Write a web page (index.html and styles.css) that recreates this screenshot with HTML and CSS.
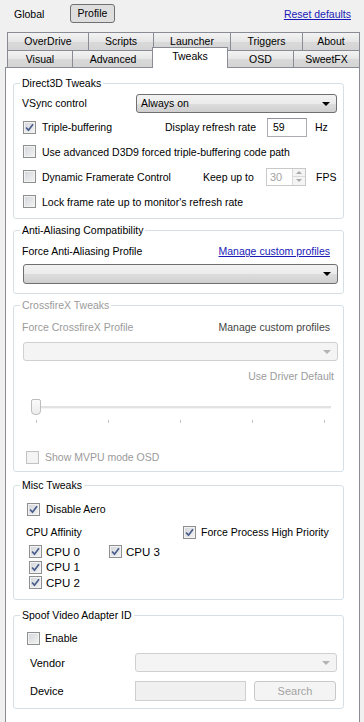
FILE: index.html
```html
<!DOCTYPE html>
<html lang="en">
<head>
  <meta charset="UTF-8" />
  <meta name="viewport" content="width=device-width, initial-scale=1.0" />
  <title>Profile - Tweaks</title>
  <link rel="stylesheet" href="styles.css">
</head>
<body>
  <div class="topbar">
    <span class="mode">Global</span>
    <span class="mode-btn">Profile</span>
    <a class="link reset" href="#">Reset defaults</a>
  </div>

  <div class="tabs">
    <div class="tabrow row1">
      <div class="tab">OverDrive</div>
      <div class="tab">Scripts</div>
      <div class="tab">Launcher</div>
      <div class="tab">Triggers</div>
      <div class="tab last">About</div>
    </div>
    <div class="tabrow row2">
      <div class="tab">Visual</div>
      <div class="tab">Advanced</div>
      <div class="tab active">Tweaks</div>
      <div class="tab">OSD</div>
      <div class="tab last">SweetFX</div>
    </div>
  </div>

  <div class="panel">
    <!-- Direct3D -->
    <fieldset class="group d3d">
      <legend>Direct3D Tweaks</legend>
      <div class="row">
        <span class="vsync-label">VSync control</span>
        <div class="combo vsync">Always on<span class="arrow"></span></div>
      </div>
      <div class="row">
        <label class="check col-a"><span class="cb on"><svg width="11" height="11" viewBox="0 0 11 11"><path d="M2 5.5 L4.5 8.2 L9 2.3" /></svg></span>Triple-buffering</label>
        <span class="col-b">Display refresh rate</span>
        <span class="textbox small">59</span>
        <span class="unit-hz">Hz</span>
      </div>
      <div class="row tall">
        <label class="check"><span class="cb"></span>Use advanced D3D9 forced triple-buffering code path</label>
      </div>
      <div class="row tall">
        <label class="check col-c"><span class="cb"></span>Dynamic Framerate Control</label>
        <span class="col-d">Keep up to</span>
        <span class="spin"><span class="spin-val">30</span><span class="spin-btns"><span class="up"></span><span class="down"></span></span></span>
        <span class="unit-fps">FPS</span>
      </div>
      <div class="row tall">
        <label class="check"><span class="cb"></span>Lock frame rate up to monitor's refresh rate</label>
      </div>
    </fieldset>

    <!-- Anti-aliasing -->
    <fieldset class="group aa">
      <legend>Anti-Aliasing Compatibility</legend>
      <div class="row head">
        <span>Force Anti-Aliasing Profile</span>
        <a class="link manage" href="#">Manage custom profiles</a>
      </div>
      <div class="combo wide"><span class="arrow"></span></div>
    </fieldset>

    <!-- CrossfireX (disabled) -->
    <fieldset class="group cfx disabled">
      <legend>CrossfireX Tweaks</legend>
      <div class="row head">
        <span>Force CrossfireX Profile</span>
        <span class="manage dim">Manage custom profiles</span>
      </div>
      <div class="combo wide off"><span class="arrow"></span></div>
      <div class="driver-default">Use Driver Default</div>
      <div class="slider">
        <span class="track"></span>
        <span class="thumb"></span>
        <div class="ticks"><i></i><i></i><i></i><i></i><i></i></div>
      </div>
      <div class="row mvpu">
        <label class="check"><span class="cb off"></span>Show MVPU mode OSD</label>
      </div>
    </fieldset>

    <!-- Misc -->
    <fieldset class="group misc">
      <legend>Misc Tweaks</legend>
      <div class="row short">
        <label class="check indent"><span class="cb on"><svg width="11" height="11" viewBox="0 0 11 11"><path d="M2 5.5 L4.5 8.2 L9 2.3" /></svg></span>Disable Aero</label>
      </div>
      <div class="row affinity-row">
        <span class="affinity">CPU Affinity</span>
        <label class="check"><span class="cb on"><svg width="11" height="11" viewBox="0 0 11 11"><path d="M2 5.5 L4.5 8.2 L9 2.3" /></svg></span>Force Process High Priority</label>
      </div>
      <div class="cpus">
        <label class="check tight"><span class="cb on"><svg width="11" height="11" viewBox="0 0 11 11"><path d="M2 5.5 L4.5 8.2 L9 2.3" /></svg></span>CPU 0</label>
        <label class="check tight"><span class="cb on"><svg width="11" height="11" viewBox="0 0 11 11"><path d="M2 5.5 L4.5 8.2 L9 2.3" /></svg></span>CPU 1</label>
        <label class="check tight"><span class="cb on"><svg width="11" height="11" viewBox="0 0 11 11"><path d="M2 5.5 L4.5 8.2 L9 2.3" /></svg></span>CPU 2</label>
        <label class="check tight"><span class="cb on"><svg width="11" height="11" viewBox="0 0 11 11"><path d="M2 5.5 L4.5 8.2 L9 2.3" /></svg></span>CPU 3</label>
      </div>
    </fieldset>

    <!-- Spoof -->
    <fieldset class="group spoof">
      <legend>Spoof Video Adapter ID</legend>
      <div class="row short">
        <label class="check indent"><span class="cb"></span>Enable</label>
      </div>
      <div class="row vendor">
        <span class="field-label">Vendor</span>
        <div class="combo off field"><span class="arrow"></span></div>
      </div>
      <div class="row device">
        <span class="field-label">Device</span>
        <span class="textbox off device-box"></span>
        <span class="button off">Search</span>
      </div>
    </fieldset>
  </div>
</body>
</html>
```

FILE: styles.css
```css
html, body { height: 722px; overflow: hidden; }
body { margin: 0; background: #f0f0f0; font-family: "Liberation Sans", Arial, sans-serif; font-size: 10.5px; color: #000; }

/* top strip */
.topbar { display: flex; align-items: center; height: 19px; padding: 4px 13px 9px 14px; }
.mode { width: 56px; }
.mode-btn { width: 43px; height: 17px; line-height: 17px; text-align: center; border: 1px solid #707070; border-radius: 3px; background: #dedede; }
.link { color: #1a1ab8; text-decoration: underline; }
.reset { margin-left: auto; }

/* tabs */
.tabs { margin-left: 7px; width: 353px; }
.tabrow { display: grid; }
.row1 { grid-template-columns: 81px 65px 77px 72px 58px; grid-template-rows: 18px; }
.row2 { grid-template-columns: 65px 81px 74px 66px 67px; grid-template-rows: 17px; }
.tab { border-top: 1px solid #898c95; border-left: 1px solid #898c95; background: linear-gradient(#f3f3f3, #e6e6e6 50%, #d9d9d9 51%, #d4d4d4); text-align: center; line-height: 17px; }
.row2 .tab { line-height: 16px; }
.tab.last { border-right: 1px solid #898c95; }
.tab.active { position: relative; z-index: 1; margin: -3px -1px -1px -1px; background: #fff; border-right: 1px solid #898c95; line-height: 17px; }

/* content panel */
.panel { position: relative; margin: 0 4px 0 5px; border: 1px solid #898c95; background: #fff; padding: 8px 15px 30px 7px; }

.group { margin: 0; border: 1px solid #d5dfe5; border-radius: 3px; padding: 0 5px 4px 8px; }
.group legend { padding: 0 2px; margin-left: -2px; line-height: 14px; }
.group + .group { margin-top: 4px; }

.row { display: flex; align-items: center; height: 24px; }
.row.tall { height: 25px; }
.row.short { height: 16px; }

.check { display: flex; align-items: center; gap: 6px; margin-left: 1px; white-space: nowrap; }
.check.indent { margin-left: 5px; }
.check.tight { gap: 4px; }

.cb { width: 11px; height: 11px; border: 1px solid #8e8f8f; background: linear-gradient(135deg, #d2d5da, #f4f4f4); box-shadow: inset 0 0 0 1px #f2f2f2; display: flex; flex-shrink: 0; }
.cb svg path { fill: none; stroke: #4a5e8c; stroke-width: 1.7; }
.cb.off { border-color: #c2c2c2; background: #f4f4f4; }

/* direct3d */
.d3d { padding-top: 1px; }
.vsync-label { width: 114px; }
.combo { position: relative; box-sizing: border-box; height: 19px; line-height: 17px; padding-left: 4px; border: 1px solid #707070; border-radius: 3px; background: linear-gradient(#f2f2f2, #ebebeb 50%, #dddddd 51%, #cfcfcf); }
.combo .arrow { position: absolute; right: 6px; top: 7px; border-left: 4px solid transparent; border-right: 4px solid transparent; border-top: 4px solid #000; }
.vsync { width: 201px; }
.col-a { width: 142px; }
.col-b { width: 102px; }
.textbox { box-sizing: border-box; height: 19px; line-height: 17px; padding-left: 5px; border: 1px solid #abadb3; border-top-color: #8e9199; background: #fff; }
.small { width: 40px; }
.unit-hz { margin-left: 8px; }
.col-c { width: 180px; }
.col-d { width: 63px; }
.spin { display: flex; box-sizing: border-box; width: 40px; height: 18px; border: 1px solid #c9c9c9; background: #fff; }
.spin-val { flex: 1; line-height: 16px; padding-left: 3px; color: #a3a3a3; font-size: 11px; }
.spin-btns { display: flex; flex-direction: column; width: 12px; border-left: 1px solid #dadada; }
.spin-btns span { flex: 1; position: relative; background: #f4f4f4; }
.spin-btns .up { border-bottom: 1px solid #dadada; }
.spin-btns .up::after, .spin-btns .down::after { content: ""; position: absolute; left: 3px; top: 2px; border-left: 3px solid transparent; border-right: 3px solid transparent; }
.spin-btns .up::after { border-bottom: 3px solid #a9a9a9; }
.spin-btns .down::after { border-top: 3px solid #a9a9a9; }
.unit-fps { margin-left: 10px; }

/* anti-aliasing */
.aa { padding-top: 5px; padding-bottom: 9px; }
.row.head { height: 18px; justify-content: space-between; }
.manage { margin-right: 8px; }
.combo.wide { margin: 4px 0 0 1px; height: 20px; }

/* crossfire */
.cfx { padding-top: 6px; padding-bottom: 6px; }
.disabled, .disabled legend { color: #9b9b9b; }
.dim { color: #454545; }
.combo.off { border-color: #d0d0d0; background: #f4f4f4; }
.combo.off .arrow { border-top-color: #b3b3b3; }
.cfx .combo.wide { margin-top: 6px; height: 19px; }
.driver-default { margin-top: 7px; height: 16px; line-height: 16px; text-align: right; padding-right: 4px; }
.slider { position: relative; height: 40px; margin-top: 4px; }
.track { position: absolute; left: 11px; right: 7px; top: 18px; height: 2px; background: #e2e2e2; border-bottom: 1px solid #f4f4f4; }
.thumb { position: absolute; left: 9px; top: 11px; width: 8px; height: 14px; border: 1px solid #bdbdbd; border-radius: 2px 2px 4px 4px; background: linear-gradient(#fafafa, #ececec); }
.ticks { display: flex; justify-content: space-between; padding: 32px 13px 0 14px; }
.ticks i { width: 1px; height: 3px; background: #c4c4c4; }
.row.mvpu { height: 16px; margin-top: 21px; }
.mvpu .check { margin-left: 4px; }

/* misc */
.misc { padding-top: 9px; padding-bottom: 9px; }
.affinity-row { height: 18px; margin-top: 6px; }
.affinity { width: 157px; margin-left: 4px; }
.affinity-row .check { gap: 5px; margin-left: 0; }
.cpus { display: grid; grid-template-columns: 80px 80px; grid-template-rows: 15px 16px 15px; grid-auto-flow: column; margin-top: 3px; padding-left: 7px; font-size: 11.5px; }
.cpus .check { margin-left: 0; }

/* spoof */
.spoof { padding-top: 8px; padding-bottom: 7px; }
.group.misc { margin-top: 6px; }
.group.spoof { margin-top: 8px; }
.spoof .check { gap: 5px; }
.field-label { width: 105px; margin-left: 8px; font-size: 11px; }
.row.vendor { height: 19px; margin-top: 7px; }
.combo.field { width: 202px; }
.row.device { height: 20px; margin-top: 9px; }
.textbox.off { border-color: #cfcfcf; background: #f0f0f0; }
.device-box { width: 111px; height: 20px; }
.button { box-sizing: border-box; width: 82px; height: 20px; margin-left: 8px; line-height: 18px; text-align: center; border: 1px solid #c8c8c8; border-radius: 3px; background: #f4f4f4; color: #a3a3a3; font-size: 11px; }
```
